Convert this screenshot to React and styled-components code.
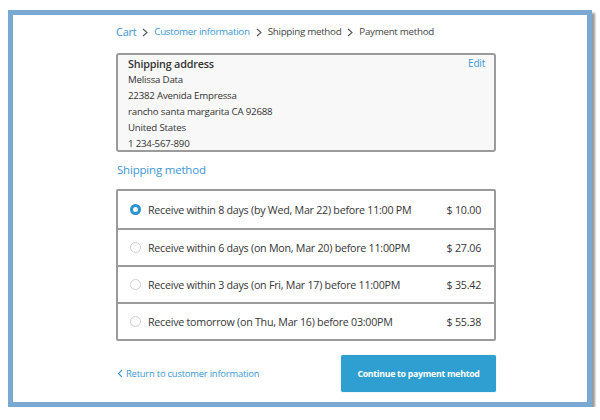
import React from 'react'
import styled, { createGlobalStyle } from 'styled-components'

const Global = createGlobalStyle`
  body {
    margin: 0;
    background: #ffffff;
    font-family: "Open Sans", "Liberation Sans", sans-serif;
    color: #333;
  }
`

const Frame = styled.div`
  box-sizing: border-box;
  margin: 10px 0 0 8px;
  width: 584px;
  height: 397px;
  border: 5px solid #7aaad4;
  box-shadow: 3px 3px 2px #9a9a9a;
  background: #fff;
  padding: 9px 0 0 103px;
`

const Column = styled.div`
  width: 380px;
  display: flex;
  flex-direction: column;
`

const Crumbs = styled.div`
  display: flex;
  align-items: center;
  gap: 4px;
  font-size: 10px;
  line-height: 16px;
  height: 16px;
  letter-spacing: -0.3px;
`

const Crumb = styled.span`
  color: ${p => (p.$link ? '#3a97d4' : '#444')};
  font-size: ${p => (p.$big ? '11px' : '9.8px')};
`

const Chevron = ({ left, color = '#555' }) => (
  <svg width="6" height="9" viewBox="0 0 6 9" style={{ margin: left ? '0 3px 0 0' : '1px 2px 0 2px' }}>
    <path d={left ? 'M5 1 L1.5 4.5 L5 8' : 'M1 1 L5 4.5 L1 8'} fill="none" stroke={color} strokeWidth="1.1" />
  </svg>
)

const AddressBox = styled.div`
  box-sizing: border-box;
  margin-top: 13px;
  height: 99px;
  overflow: hidden;
  border: 2px solid #9b9b9b;
  border-radius: 3px;
  background: #f8f8f8;
  padding: 0 9px 0 10px;
  font-size: 9.7px;
  letter-spacing: -0.2px;
`

const AddressHead = styled.div`
  display: flex;
  justify-content: space-between;
  align-items: center;
  height: 16px;
  margin-bottom: 1px;
`

const AddressTitle = styled.span`
  font-weight: 600;
  font-size: 10.8px;
  color: #333;
`

const EditLink = styled.span`
  color: #3a97d4;
  font-size: 10px;
`

const Line = styled.div`
  line-height: 16px;
  color: #333;
`

const SectionTitle = styled.div`
  margin: 10px 0 0 1px;
  color: #3a97d4;
  font-size: 11.5px;
  line-height: 16px;
  letter-spacing: -0.2px;
`

const Options = styled.div`
  margin-top: 11px;
  border: 2px solid #9b9b9b;
  border-radius: 2px;
  display: flex;
  flex-direction: column;
`

const Option = styled.div`
  box-sizing: border-box;
  height: 37px;
  display: flex;
  align-items: center;
  padding: 0 13px 0 12px;
  font-size: 10.7px;
  letter-spacing: -0.25px;
  color: #363636;
  & + & {
    border-top: 2px solid #9b9b9b;
  }
`

const Radio = styled.span`
  box-sizing: border-box;
  width: 11px;
  height: 11px;
  border-radius: 50%;
  margin-right: 7px;
  flex: none;
  border: ${p => (p.$on ? '3px solid #2a94cf' : '1px solid #cfcfcf')};
  background: #fff;
`

const Label = styled.span`
  flex: 1;
`

const Price = styled.span`
  color: #363636;
`

const Footer = styled.div`
  margin-top: 14px;
  display: flex;
  align-items: center;
  justify-content: space-between;
`

const Back = styled.span`
  display: flex;
  align-items: center;
  color: #3a97d4;
  font-size: 9.4px;
  letter-spacing: -0.2px;
  padding-left: 1px;
`

const Button = styled.button`
  width: 155px;
  height: 37px;
  border: none;
  border-radius: 2px;
  background: #2e9fd0;
  color: #fff;
  font-family: inherit;
  font-weight: 700;
  font-size: 8.8px;
  letter-spacing: -0.3px;
  box-shadow: 0 0 1px #6fb8dd;
`

const options = [
  { label: 'Receive within 8 days (by Wed, Mar 22) before 11:00 PM', price: '$ 10.00', on: true },
  { label: 'Receive within 6 days (on Mon, Mar 20) before 11:00PM', price: '$ 27.06' },
  { label: 'Receive within 3 days (on Fri, Mar 17) before 11:00PM', price: '$ 35.42' },
  { label: 'Receive tomorrow (on Thu, Mar 16) before 03:00PM', price: '$ 55.38' },
]

export default function App() {
  return (
    <>
      <Global />
      <Frame>
        <Column>
          <Crumbs>
            <Crumb $link $big>Cart</Crumb>
            <Chevron />
            <Crumb $link>Customer information</Crumb>
            <Chevron />
            <Crumb>Shipping method</Crumb>
            <Chevron />
            <Crumb>Payment method</Crumb>
          </Crumbs>

          <AddressBox>
            <AddressHead>
              <AddressTitle>Shipping address</AddressTitle>
              <EditLink>Edit</EditLink>
            </AddressHead>
            <Line>Melissa Data</Line>
            <Line>22382 Avenida Empressa</Line>
            <Line>rancho santa margarita CA 92688</Line>
            <Line>United States</Line>
            <Line>1 234-567-890</Line>
          </AddressBox>

          <SectionTitle>Shipping method</SectionTitle>

          <Options>
            {options.map(o => (
              <Option key={o.label}>
                <Radio $on={o.on} />
                <Label>{o.label}</Label>
                <Price>{o.price}</Price>
              </Option>
            ))}
          </Options>

          <Footer>
            <Back>
              <Chevron left color="#3a97d4" />
              Return to customer information
            </Back>
            <Button>Continue to payment mehtod</Button>
          </Footer>
        </Column>
      </Frame>
    </>
  )
}
